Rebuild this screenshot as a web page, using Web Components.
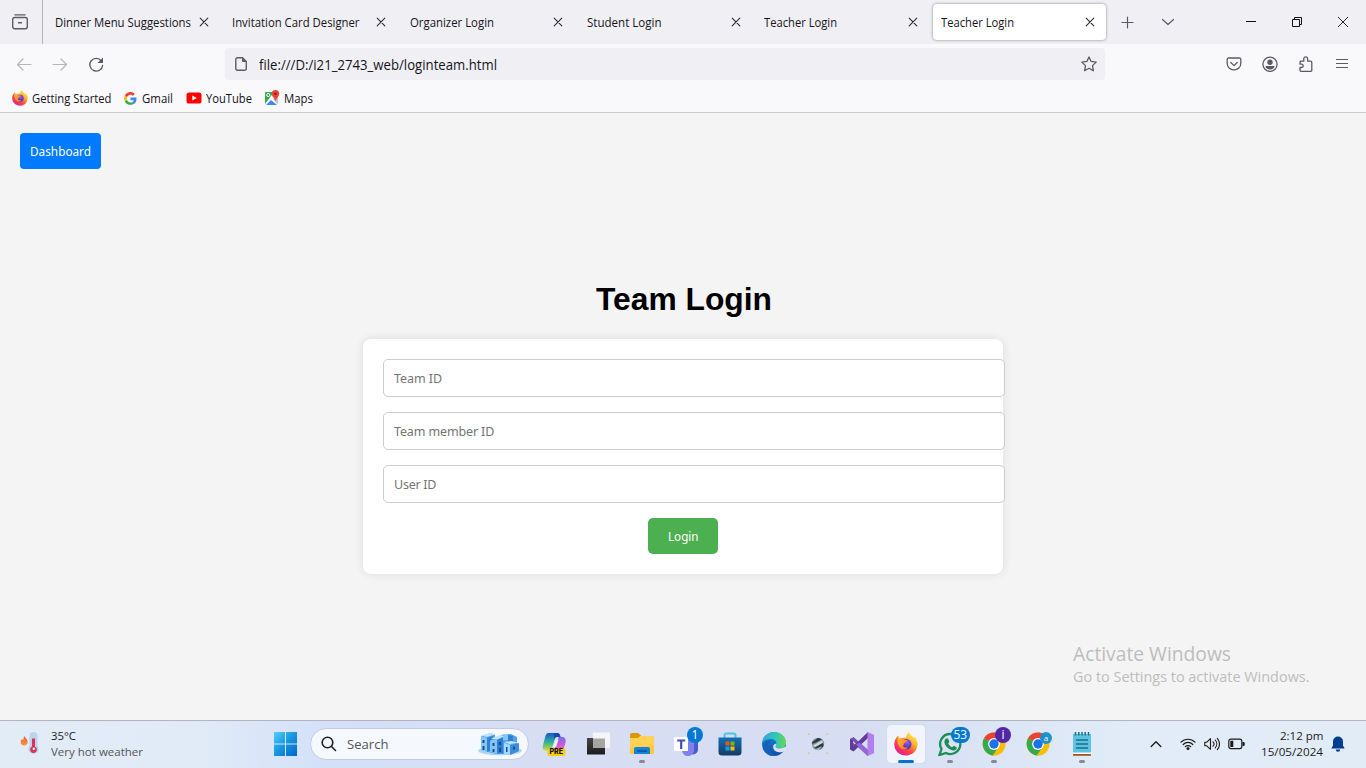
<!DOCTYPE html>
<html lang="en">
<head>
<meta charset="utf-8">
<title>Teacher Login</title>
<style>
html,body{margin:0;height:100%;overflow:hidden}
body{font-family:"Open Sans","Noto Sans",sans-serif;font-size:12px;color:#15141a}
</style>
</head>
<body>
<desktop-screen></desktop-screen>
<script>
const define = (name, html, setup) => customElements.define(name, class extends HTMLElement {
  connectedCallback() {
    if (this.shadowRoot) return;
    const t = document.createElement('template');
    t.innerHTML = typeof html === 'function' ? html(this) : html;
    this.attachShadow({ mode: 'open' }).append(t.content.cloneNode(true));
    if (setup) setup(this);
  }
});

const firefox = `<defs><linearGradient id="a" x1=".85" y1=".05" x2=".2" y2=".95"><stop stop-color="#fff44f"/><stop offset=".35" stop-color="#ffb02e"/><stop offset=".65" stop-color="#ff4a3d"/><stop offset="1" stop-color="#e5159a"/></linearGradient><radialGradient id="b" cx=".6" cy=".35"><stop stop-color="#a058f5"/><stop offset="1" stop-color="#4c35b8"/></radialGradient><linearGradient id="c" x1="0" y1="0" x2="1" y2=".7"><stop stop-color="#ffbf36"/><stop offset="1" stop-color="#ff7a28"/></linearGradient></defs><path fill="url(#a)" d="M15 0c.2 2.300 3 3.500 5 6.200L21 5c2.500 3 3.500 8 1.200 12.500-2 3.800-6 6-10.200 6C5.800 23.500.3 19 .3 12.500c0-3 1-6 3.700-9l1 3.300 2.200-.5c1.500-.8 3-1 5-.8C12.300 3.500 13.300 1 15 0z"/><circle cx="12.300" cy="12.300" r="5.200" fill="url(#b)"/><path fill="url(#c)" d="M4 3.700c.5 1 .8 2 1.400 2.700 1.800-.4 3.300.3 4.400 1.300 1.200.2 2.400.3 3.800.6-.4 1.700-2.200 1.900-3 2.600-.4 1.700-1.500 1.700-1.600 3 .6 2 3.300 1.500 4.900 1.500-1.400 2-4.300 2.500-6.500 1-3.600-2.500-4.800-7.100-3.400-12.700z"/>`;
const chrome = `<circle cx="12" cy="12" r="11.500" fill="#fbbc04"/><path fill="#ea4335" d="M12 12 2 6.200C4.500 2.200 8 .5 12 .5c4.500 0 8 2.300 10 5.800z"/><path fill="#34a853" d="M12 12 2 6.200C-1 12 1 21.500 11 23.500l6-8.500z"/><path fill="#fbbc04" d="M11 23.500 17 14l-1-7.700h6c3 5.500.5 16.500-11 17.200z"/><circle cx="12" cy="12" r="5.900" fill="#fff"/><circle cx="12" cy="12" r="4.700" fill="#1a73e8"/>`;
const stroke = (d, c = '#5b5b66', w = 1.3) => `<path fill="none" stroke="${c}" stroke-width="${w}" stroke-linecap="round" stroke-linejoin="round" d="${d}"/>`;

const ICONS = {
  shelf: [16, 16, stroke('M3 .9h10M2.700 3.500h10.600a2 2 0 0 1 2 2v7.300a2 2 0 0 1-2 2H2.700a2 2 0 0 1-2-2V5.500a2 2 0 0 1 2-2zM6.500 8.800h3', '#5b5b66', 1.4)],
  close: [10, 10, stroke('M1.200 1.200l7.600 7.600M8.800 1.200L1.200 8.800', '#2b2a33', 1.1)],
  plus: [14, 14, stroke('M7.500 2v11M2 7.500h11', '#5b5b66', 1.2)],
  down: [14, 8, stroke('M1.500 1.500L7 6.500l5.500-5', '#5b5b66', 1.2)],
  min: [10, 10, '<path d="M0 4.500h10" stroke="#111" fill="none"/>'],
  restore: [10, 10, '<path d="M.5 2.500h7v7h-7zM2.500 2.500v-2h7v7h-2" stroke="#111" fill="none"/>'],
  winclose: [10, 10, '<path d="M0 0l10 10M10 0L0 10" stroke="#111" stroke-width=".9" fill="none"/>'],
  back: [16, 16, stroke('M15 8.500H1.500M7 3L1.500 8.500 7 14', '#b5b5bc', 1.2)],
  fwd: [16, 16, stroke('M1 8.500h13.500M9 3L14.500 8.500 9 14', '#b5b5bc', 1.2)],
  reload: [16, 16, stroke('M13.300 4.800A6.400 6.400 0 1 0 14.600 9.500', '#5b5b66', 1.4) + '<path d="M15 1.500V7H9.500z" fill="#5b5b66"/>'],
  doc: [12, 14, stroke('M2.500.7h5l3.800 3.800v7.300a1.500 1.500 0 0 1-1.500 1.500H2.500A1.700 1.700 0 0 1 .8 11.600V2.400A1.700 1.700 0 0 1 2.500.7z', '#5b5b66', 1.4) + '<path d="M7 .5l4.500 4.500H8a1 1 0 0 1-1-1z" fill="#5b5b66"/>'],
  star: [16, 16, stroke('M8 .9l2.100 4.500 5.100.7-3.700 3.500.9 5.200L8 12.300l-4.400 2.500.9-5.200L.8 6.100l5.100-.7z')],
  pocket: [16, 16, stroke('M2.500 2h11a1.300 1.300 0 0 1 1.300 1.300v4A6.500 6.500 0 0 1 8 13.900a6.500 6.500 0 0 1-6.800-6.600v-4A1.300 1.300 0 0 1 2.500 2zM4.800 6.500L8 9.600l3.200-3.100', '#5b5b66', 1.3)],
  user: [16, 16, '<circle cx="8" cy="8.300" r="7.100" fill="none" stroke="#5b5b66" stroke-width="1.300"/><circle cx="8" cy="6.200" r="2.700" fill="#5b5b66"/><path d="M3.500 9.900h9c0 2-2 3.600-4.500 3.600s-4.500-1.600-4.500-3.600z" fill="#5b5b66"/>'],
  puzzle: [16, 16, stroke('M2.200 5.200h3.600V2.700a1.900 1.900 0 0 1 3.800 0v2.500h3a1.200 1.200 0 0 1 1.200 1.200v7.800a1.200 1.200 0 0 1-1.200 1.200H3.300A1.200 1.200 0 0 1 2 14.200v-2.700h1.500a1.700 1.700 0 0 0 0-3.400H2z', '#5b5b66', 1.3)],
  menu: [14, 12, '<path d="M1 1.500h12M1 5.500h12M1 9.500h12" stroke="#5b5b66" stroke-width="1.200"/>'],
  firefox: [24, 24, firefox],
  google: [24, 24, '<path fill="#4285f4" d="M23 10v3.500c0 3.500-1.500 6.500-3.800 8.300l-3.800-3c1.300-.8 2.200-2 2.500-3.600H12V10z"/><path fill="#34a853" d="M19.200 21.300C13 26 4.500 23.500 1.600 17.500l3.900-3c1.500 4.500 6.200 6.300 9.900 4.200z"/><path fill="#fbbc05" d="M1.600 17.500a12 12 0 0 1 0-11l4 3a8 8 0 0 0-.1 5z"/><path fill="#ea4335" d="M1.600 6.500C5-.5 14-2 20 3.500l-3.500 3.300C12.700 3.500 7.200 5 5.600 9.500z"/>'],
  youtube: [16, 12, '<rect x=".5" y=".5" width="15" height="11" rx="2.600" fill="#f00"/><path fill="#fff" d="M6.300 3.500v5L10.800 6z"/>'],
  maps: [16, 16, '<path fill="#34a853" d="M2 2h8L1 14V3a1 1 0 0 1 1-1z"/><path fill="#fff" d="M10 5l3 4L4 15H1z"/><path fill="#4285f4" d="M7 10l6 5H2z"/><path fill="#bdc1c6" d="M9 9l5-2v7.500z"/><circle cx="4.200" cy="5" r="1.600" fill="none" stroke="#fff"/><path fill="#ea4335" d="M11.500 0a3.700 3.700 0 0 1 3.700 3.700c0 3-2.700 4-3.700 7.300-1-3.300-3.700-4.300-3.700-7.300A3.700 3.700 0 0 1 11.500 0z"/><circle cx="11.500" cy="3.700" r="1.300" fill="#8b1d16"/>'],
  weather: [20, 24, '<defs><linearGradient id="a" x2="0" y2="1"><stop stop-color="#f2553f"/><stop offset="1" stop-color="#f79b34"/></linearGradient></defs><path fill="url(#a)" d="M4.500 4c.5 2 3.200 3 3.200 6A3.500 3.500 0 0 1 4 13.500 3.500 3.500 0 0 1 .7 10c0-1.500.8-2 .8-3l1.500 1c.7-1 .5-2.600 1.500-4z"/><path fill="#b9d5ef" d="M13.500 0a4 4 0 0 1 4 4v9.500a5.200 5.200 0 1 1-8 0V4a4 4 0 0 1 4-4z"/><path fill="#dc3058" d="M12 6.500h3v8a3.400 3.400 0 1 1-3 0z"/><circle cx="13.800" cy="16.800" r="1.200" fill="#fff"/>'],
  start: [24, 24, '<defs><linearGradient id="a" gradientUnits="userSpaceOnUse" x2="24" y2="24"><stop stop-color="#55d2fb"/><stop offset=".5" stop-color="#1795e0"/><stop offset="1" stop-color="#0067cc"/></linearGradient></defs><path fill="url(#a)" d="M1 0h11v11.500H1zM13 0h11v11.500H13zM1 12.500h11V24H1zM13 12.500h11V24H13z"/>'],
  search: [16, 16, stroke('M11.800 6.500A5.300 5.300 0 1 1 1.200 6.500 5.300 5.300 0 1 1 11.800 6.500zM10.500 10.500l4 4', '#222', 1.6)],
  city: [44, 24, '<ellipse cx="22" cy="18.800" rx="21.800" ry="4.500" fill="#b0d5ec"/><path fill="#4fa3ec" d="M3 4l10-3 4 2v4l7-4 9-1 6 3v13l-5 4H18L3 18z"/><path fill="#85c6fa" d="M3 4l6 2v14l-6-2zM13 7l6 1v13.500L9 19V9zM25 2l5 1v5h-6z"/><path fill="#2f80d0" d="M9 6l6-2v3l-3 2v10l-3 1zM19 8l6-3v16l-6 .5zM30 3l5 1v5l-5 1z"/><path fill="#68b5f5" d="M26 11l7-1 8 2v7l-9 4-6-1z"/><path fill="#a5d8fc" d="M26 11l6 2v10l-6-1z"/><path fill="#3c8edb" d="M32 13l9-2v8l-9 4z"/><path fill="#c1e5fd" d="M3 3.500L13 1l4 1.500L9 5zM13 6.500L22 3l4 1.500-7 3zM26 10l7-1 7 1.500L32 12z"/><path fill="#174f94" d="M4.500 8h2v3h-2zM4.500 14h2v4h-2zM14.500 11h2v3h-2zM14.500 17h2v3h-2zM21 10h2v3h-2zM21 16h2v4h-2zM28 15h1.500v5H28zM35 14.500h2v3h-2z"/>'],
  copilot: [26, 26, '<defs><linearGradient id="a" x2="0" y2="1"><stop stop-color="#1d50cf"/><stop offset=".5" stop-color="#2bb09b"/><stop offset="1" stop-color="#c9dc3b"/></linearGradient><linearGradient id="b" x2="0" y2="1"><stop stop-color="#7669f1"/><stop offset=".55" stop-color="#d65bd2"/><stop offset="1" stop-color="#fa786c"/></linearGradient></defs><path fill="url(#a)" d="M8 2h8c2.500 0 3 2 3.500 4h-3c-2 0-2.500 1.500-3.200 4L11 17c-.6 2-1.500 2.500-3.500 2.500H5C2 19.500 1 17 2 14l2.500-9C5 3 6 2 8 2z"/><path fill="url(#b)" d="M18 6h3c3 0 4.300 2.500 3.500 5.500l-2 7C22 21 20 22 18 22h-6l5-13c.5-2 0-3 1-3z"/><path fill="#1747ae" d="M13 2h3c2.500 0 3 2 3.500 4h-4c-1.500 0-2.200 1-2.500 2z"/><path fill="#f4f6fe" d="M14.500 9h3l-2.300 7h-3z" opacity=".75"/><rect x="6.500" y="17.500" width="18" height="7.500" rx="2" fill="#fdcb12"/>'],
  taskview: [24, 24, '<defs><linearGradient id="a" x2="0" y2="1"><stop stop-color="#444"/><stop offset="1" stop-color="#1c1c1c"/></linearGradient></defs><path fill="url(#a)" d="M1 6h18v16.500H1z"/><path fill="#f5f5f5" d="M7 .500h17.500v15.500H7z"/><path fill="#a5a5a5" d="M7 6.500h12V16H7z"/>'],
  explorer: [24, 24, '<path fill="#dc9800" d="M0 3a2 2 0 0 1 2-2h6l3 2.500V7H0z"/><path fill="#ffc83d" d="M0 6h8l2.500-2H22a2 2 0 0 1 2 2v16H0z"/><path fill="#ffd869" d="M0 6h8l2.500-2H22a2 2 0 0 1 2 2v7L0 16z" opacity=".55"/><path fill="#1683d8" d="M4 22v-5a2 2 0 0 1 2-2h12a2 2 0 0 1 2 2v5z"/><path fill="#0b5cad" d="M7 18h10v2H7z"/>'],
  teams: [24, 24, '<circle cx="17" cy="5" r="4" fill="#7b83eb"/><path fill="#5059c9" d="M17 9h7v8a5 5 0 0 1-7 5z"/><path fill="#7b83eb" d="M9 7h11v10a6 6 0 0 1-12 2z"/><rect y="5" width="14" height="14" rx="1" fill="#fff"/><path fill="#444db8" d="M3.200 7.500h8v2H8.300V17H6.100V9.500H3.200z"/>'],
  store: [24, 24, '<defs><linearGradient id="a" x2="0" y2="1"><stop stop-color="#1170b8"/><stop offset="1" stop-color="#173a63"/></linearGradient></defs><path d="M6.500 6V3.500a2 2 0 0 1 2-2h7a2 2 0 0 1 2 2V6" fill="none" stroke="#49c3ef" stroke-width="2"/><path fill="url(#a)" d="M.5 5.500h23V20a3.500 3.500 0 0 1-3.500 3.500H4A3.500 3.500 0 0 1 .5 20z"/><path fill="#f25022" d="M7.500 9.500h4v4h-4z"/><path fill="#7fba00" d="M12.500 9.500h4v4h-4z"/><path fill="#00a4ef" d="M7.500 14.500h4v4h-4z"/><path fill="#ffb900" d="M12.500 14.500h4v4h-4z"/>'],
  edge: [24, 24, '<defs><linearGradient id="a"><stop stop-color="#28a9e0"/><stop offset=".6" stop-color="#36c7b3"/><stop offset="1" stop-color="#66dc4b"/></linearGradient><linearGradient id="b" x2="0" y2="1"><stop stop-color="#1c85d4"/><stop offset="1" stop-color="#114fa6"/></linearGradient></defs><circle cx="12" cy="12" r="12" fill="url(#b)"/><path fill="url(#a)" d="M.3 11C1 4.500 6 0 12 0c7 0 12 5 12 10.500 0 4-3 6-6.500 6-2.500 0-4-.8-4-2 0-.8 1-1 1-3C14.500 9 12 7 8.500 7 5 7 2 8.500.3 11z"/><path fill="#1461ba" d="M9 9c-5 4-2 13 6 14.500-4 1.500-11 0-13.500-6C.5 12 3 8 9 9z"/><path fill="#d9e1f4" d="M14.500 11.500c0 2-1 2.200-1 3 0 1.200 1.500 2 4 2 2 0 4-.8 6-2l1 2-1.500 2.500c-4 2-10.500 2-11.800-3-.3-2 .3-4 3.300-4.500z"/>'],
  lens: [24, 24, '<path fill="#ebbf69" d="M2 1.500h1.500V3H2zM20.500 1.500H22V3h-1.500zM2 20.500h1.500V22H2zM20.500 20.500H22V22h-1.500z"/><circle cx="12" cy="12" r="6.200" fill="#81929c"/><path fill="#2c363b" d="M6.500 10L12 6l4 1-5 3-5 2zM8 16l9-5 .5 3-4 3.300z"/><path fill="#c9dadf" d="M7 13.500l9-5 1 2L9 15z"/><path fill="#a9bcc4" d="M9 17.500l7-3.500-3 4z"/>'],
  vs: [24, 24, '<path fill="#7450b0" fill-rule="evenodd" d="M0 7l3.500-2L18 18v6L0 8zM3 9l3 3-3 3z"/><path fill="#5e3c98" d="M0 17.500L3.500 19.500 18 6V0L3 14.500V9L0 7z"/><path fill="#b180ee" d="M17.500 0L24 2.800v18.400L17.500 24z"/><path fill="#9766d5" d="M17.500 24L6 12.500l3.500-2L18 18z"/>'],
  whatsapp: [24, 24, '<path d="M12.500 2A10 10 0 1 1 8 21l-6.500 2 2-6A10 10 0 0 1 12.500 2z" fill="none" stroke="#1d8d56" stroke-width="2.300"/><path fill="#1d8d56" d="M8 6.500h2l1.400 3.300-1.200 1.700c1 2 2.200 3 4 3.800l1.500-1.500 3 1.500c.5 2-1.500 3.500-3.500 3.200-5-1-8.500-5-8.800-8.500 0-1.500.6-2.700 1.600-3.500z"/>'],
  chrome: [24, 24, chrome],
  notepad: [20, 24, '<path fill="#5cc3e2" d="M1 2h18v20H1z"/><path stroke="#1b6d8c" stroke-width="1.500" d="M3.500 0v3.500M6.800 0v3.500M10 0v3.500M13.200 0v3.500M16.500 0v3.500M4 8h12M4 12h12M4 16h12" fill="none"/><path fill="#fff" d="M1 20.500h18V22H1z"/><path fill="#a6551b" d="M1 22h18v1.800H1z"/>'],
  up: [12, 8, stroke('M1.200 6.500L6 1.700l4.800 4.800', '#1b1b1b', 1.3)],
  wifi: [16, 14, '<path fill="none" stroke="#1b1b1b" stroke-width="1.200" stroke-linecap="round" d="M1 5.200a9.800 9.800 0 0 1 14 0M3.200 7.500a6.700 6.700 0 0 1 9.600 0M5.300 9.700a3.800 3.800 0 0 1 5.400 0"/><circle cx="8" cy="11.500" r="1.500" fill="#1b1b1b"/>'],
  volume: [16, 14, stroke('M.8 5.200h2L6.500 1.700v10.600L2.800 8.800h-2zM9 4.800a3.200 3.200 0 0 1 0 4.400M11.200 3a6 6 0 0 1 0 8M13.300 1.300a8.500 8.500 0 0 1 0 11.400', '#1b1b1b', 1.1)],
  battery: [17, 12, '<rect x=".8" y="1.200" width="13" height="9.400" rx="2" fill="none" stroke="#1b1b1b" stroke-width="1.200"/><path d="M2.300 2.800h3V9h-3zM14.500 4h1.200a1 1 0 0 1 1 1v2a1 1 0 0 1-1 1h-1.200z" fill="#1b1b1b"/>'],
  bell: [14, 16, '<path fill="#003e92" d="M7 .5a5 5 0 0 1 5 5v4l1.700 3H.3l1.700-3v-4a5 5 0 0 1 5-5zM4.800 13.500h4.400a2.200 2.200 0 0 1-4.400 0z"/>'],
};

define('ui-icon', el => {
  const [w, h, body] = ICONS[el.getAttribute('name')];
  const s = (el.getAttribute('size') || w) / w;
  return `<style>:host{display:block;flex:none;width:${w * s}px;height:${h * s}px}svg{display:block}</style><svg width="${w * s}" height="${h * s}" viewBox="0 0 ${w} ${h}">${body}</svg>`;
});

define('browser-tab', `<style>
:host{display:block;flex:none;box-sizing:border-box;width:177.300px;height:44px;padding:4px 2px}
.box{height:36px;border-radius:4px;display:flex;align-items:center;justify-content:space-between;padding:0 11px 0 8.500px;box-sizing:border-box}
:host([active]) .box{background:#fff;box-shadow:0 0 3px rgba(0,0,0,.45)}
</style><div class="box"><slot></slot><ui-icon name="close"></ui-icon></div>`);

define('tab-strip', `<style>
:host{display:flex;height:44px;background:#f0f0f4;align-items:center}
.shelf{width:42px;height:44px;border-right:1px solid #b4b4bb;display:flex;align-items:center;justify-content:center}
.shelf ui-icon{margin-right:2px}
.tabs{display:flex;margin-left:1.500px}
.new{margin-left:12px;display:flex;align-items:center;gap:26.500px}
.win{margin-left:auto;display:flex;gap:36px;padding-right:18px;align-items:center}
</style><div class="shelf"><ui-icon name="shelf"></ui-icon></div>
<div class="tabs">
<browser-tab><ui-text w="136">Dinner Menu Suggestions</ui-text></browser-tab>
<browser-tab><ui-text w="127.500">Invitation Card Designer</ui-text></browser-tab>
<browser-tab><ui-text w="84">Organizer Login</ui-text></browser-tab>
<browser-tab><ui-text w="74.500">Student Login</ui-text></browser-tab>
<browser-tab><ui-text w="73">Teacher Login</ui-text></browser-tab>
<browser-tab active><ui-text w="73">Teacher Login</ui-text></browser-tab>
</div>
<div class="new"><ui-icon name="plus"></ui-icon><ui-icon name="down"></ui-icon></div>
<div class="win"><ui-icon name="min"></ui-icon><ui-icon name="restore"></ui-icon><ui-icon name="winclose"></ui-icon></div>`);

define('nav-bar', `<style>
:host{display:grid;grid-template-columns:225px 880px 1fr;height:40px;background:#f9f9fb;align-items:center}
.left{display:flex;gap:20px;padding-left:16px}
.url{display:flex;align-items:center;height:32px;background:#f0f0f4;border-radius:4px;padding:0 8px 0 10px;font-size:14px}
.url ui-text{margin-left:12px}.url .star{margin-left:auto}
.right{display:flex;align-items:center;justify-content:flex-end;gap:20px;padding-right:17px}
.right .shift{margin:0 1px 0 -1px}
</style>
<div class="left"><ui-icon name="back"></ui-icon><ui-icon name="fwd"></ui-icon><ui-icon name="reload"></ui-icon></div>
<div class="url"><ui-icon name="doc"></ui-icon><ui-text w="238">file:///D:/i21_2743_web/loginteam.html</ui-text><ui-icon class="star" name="star"></ui-icon></div>
<div class="right"><ui-icon class="shift" name="pocket"></ui-icon><ui-icon class="shift" name="user"></ui-icon><ui-icon class="shift" name="puzzle"></ui-icon><ui-icon name="menu"></ui-icon></div>`);

define('bookmark-item', el => `<style>:host{display:flex;align-items:center;gap:4px}</style><ui-icon name="${el.getAttribute('icon')}" size="${el.getAttribute('size') || 16}"></ui-icon><slot></slot>`);

define('bookmarks-bar', `<style>:host{display:flex;align-items:center;gap:12.500px;height:28px;background:#f9f9fb;border-bottom:1px solid #ccc;padding-left:12px}</style>
<bookmark-item icon="firefox"><ui-text w="79.500">Getting Started</ui-text></bookmark-item>
<bookmark-item icon="google" size="13"><ui-text w="31" style="margin-left:1px">Gmail</ui-text></bookmark-item>
<bookmark-item icon="youtube"><ui-text w="46">YouTube</ui-text></bookmark-item>
<bookmark-item icon="maps"><ui-text w="29">Maps</ui-text></bookmark-item>`);

define('text-field', el => `<style>:host{display:block;width:100%;margin-bottom:15px}
input{display:block;width:100%;box-sizing:content-box;height:16px;padding:10px;border:1px solid #ccc;border-radius:5px;background:#fff;font:12.500px "Noto Sans",sans-serif;letter-spacing:${el.getAttribute('spacing') || 0}px;color:#000}
input::placeholder{color:#757575;opacity:1}</style><input placeholder="${el.getAttribute('label')}">`);

define('push-button', `<style>:host{display:inline-block}
button{display:flex;align-items:center;justify-content:center;width:var(--w);height:36px;padding:0;border:0;border-radius:var(--r);background:var(--bg);color:#fff;font:13px "Noto Sans",sans-serif}</style><button><slot></slot></button>`);

define('login-page', `<style>
:host{display:flex;flex-direction:column;height:607px;background:#f4f4f4;box-sizing:border-box;padding-top:20px;position:relative;font-family:"Liberation Sans",sans-serif;color:#000}
.dash{margin-left:20px;--w:81px;--r:4px;--bg:#007bff;align-self:flex-start}
h1{margin:111px 0 21px;font-size:32px;line-height:38px;text-align:center;padding-left:1px}
.card{width:600px;height:195px;padding:20px;margin:0 auto;background:#fff;border-radius:8px;box-shadow:0 0 10px rgba(0,0,0,.1)}
.row{display:flex;justify-content:center}
.login{--w:70px;--r:5px;--bg:#4caf50}
.mark{position:absolute;left:1073px;top:527px;color:#bdbdbd;font-family:"Open Sans",sans-serif;display:flex;flex-direction:column}
.mark .a{font-size:20px;line-height:28px}.mark .b{font-size:14.500px;line-height:18px}
</style>
<push-button class="dash"><ui-text w="61">Dashboard</ui-text></push-button>
<h1><ui-text w="176">Team Login</ui-text></h1>
<div class="card">
<text-field label="Team ID" spacing="-0.05"></text-field>
<text-field label="Team member ID" spacing="-0.13"></text-field>
<text-field label="User ID" spacing="-0.25"></text-field>
<div class="row"><push-button class="login"><ui-text w="30.500">Login</ui-text></push-button></div>
</div>
<div class="mark"><ui-text class="a" w="158">Activate Windows</ui-text><ui-text class="b" w="236.500">Go to Settings to activate Windows.</ui-text></div>`);

define('task-item', el => {
  const b = el.getAttribute('badge'), bc = el.getAttribute('badge-bg') || '#0078d4', n = el.getAttribute('icon');
  return `<style>
:host{display:flex;flex:none;width:44px;height:47px;align-items:center;justify-content:center;position:relative}
:host([active])::before{content:"";position:absolute;left:3px;top:4px;width:38px;height:38px;border-radius:4px;background:rgba(255,255,255,.65);box-shadow:0 0 1px rgba(0,0,0,.2)}
:host([running])::after,:host([active])::after{content:"";position:absolute;bottom:5px;left:19px;width:6px;height:3px;border-radius:2px;background:#858a96}
:host([active])::after{left:14px;width:16px;background:#0073d0}
ui-icon{position:relative;margin-bottom:1px}
.badge{position:absolute;top:6px;left:23px;height:16px;min-width:16px;box-sizing:border-box;border-radius:9px;background:${bc};color:#fff;font-size:12px;line-height:16px;text-align:center;padding:0 2.500px}
.badge.small{top:11px;left:24px;height:12px;min-width:12px;font-size:8px;line-height:11px;opacity:.95}
.pre{position:absolute;left:17.500px;top:27px;font:800 7px/8px "Inter",sans-serif;color:#111}
</style><ui-icon name="${n}"></ui-icon>${b ? `<span class="badge ${el.hasAttribute('small') ? 'small' : ''}">${b}</span>` : ''}${n === 'copilot' ? '<span class="pre">PRE</span>' : ''}`;
});

define('task-bar', `<style>
:host{display:flex;box-sizing:border-box;height:48px;border-top:1px solid #b0b5c0;background:linear-gradient(90deg,#e1ecf7 0,#e0ebf7 200px,#d3e0f8 330px,#d7def4 520px,#d7def3 850px,#dbe5f5 1000px,#e1ecf8 1130px,#e1ecf7);align-items:center;font-size:11.500px;line-height:16px;color:#1b1b1b}
.weather{width:273px;display:flex;align-items:center;gap:11px;box-sizing:border-box;padding:0 0 1px 20px}
.col{display:flex;flex-direction:column;margin-bottom:1px}.col .sub{color:#555}
.search{display:flex;align-items:center;box-sizing:border-box;width:219px;height:32px;margin:0 3px 1px 13px;border:1px solid #c3cde0;border-radius:16px;background:#f5f8fd;padding:0 6px 0 10px;font-size:13px;color:#555;gap:10px}
.search .city{margin-left:auto}
.tray{margin-left:auto;display:flex;align-items:center;padding-bottom:1px}
.clock{align-items:flex-end;margin:0 8px 1px 16px}
</style>
<div class="weather"><ui-icon name="weather"></ui-icon><div class="col"><ui-text w="25">35°C</ui-text><ui-text class="sub" w="92">Very hot weather</ui-text></div></div>
<ui-icon name="start" style="margin-bottom:1px"></ui-icon>
<div class="search"><ui-icon name="search"></ui-icon><ui-text w="41.500">Search</ui-text><ui-icon class="city" name="city"></ui-icon></div>
<task-item icon="copilot"></task-item><task-item icon="taskview"></task-item><task-item icon="explorer" running></task-item><task-item icon="teams" badge="1"></task-item><task-item icon="store"></task-item><task-item icon="edge"></task-item><task-item icon="lens"></task-item><task-item icon="vs"></task-item><task-item icon="firefox" active></task-item><task-item icon="whatsapp" badge="53" running></task-item><task-item icon="chrome" badge="i" badge-bg="#5127a5" running></task-item><task-item icon="chrome" badge="a" badge-bg="#1590d4" small></task-item><task-item icon="notepad" running></task-item>
<div class="tray"><ui-icon name="up" style="margin-right:18px"></ui-icon><ui-icon name="wifi" style="margin-right:8px"></ui-icon><ui-icon name="volume" style="margin-right:8px"></ui-icon><ui-icon name="battery"></ui-icon>
<div class="col clock"><ui-text w="43.500">2:12 pm</ui-text><ui-text w="62">15/05/2024</ui-text></div><ui-icon name="bell" style="margin-right:21px"></ui-icon></div>`);

define('desktop-screen', `<style>:host{display:flex;flex-direction:column;width:1366px;height:768px;overflow:hidden}</style>
<tab-strip></tab-strip><nav-bar></nav-bar><bookmarks-bar></bookmarks-bar><login-page></login-page><task-bar></task-bar>`);

/* A single line of text, condensed or expanded to the width given in w. */
define('ui-text', `<style>:host{display:inline-block;flex:none;white-space:nowrap}span{display:inline-block;transform-origin:0 50%}</style><span><slot></slot></span>`, el => {
  const span = el.shadowRoot.querySelector('span'), w = +el.getAttribute('w');
  const natural = span.getBoundingClientRect().width;
  el.style.width = w + 'px';
  el.style.textAlign = 'left';
  span.style.transform = `scaleX(${w / natural})`;
});
</script>
</body>
</html>
